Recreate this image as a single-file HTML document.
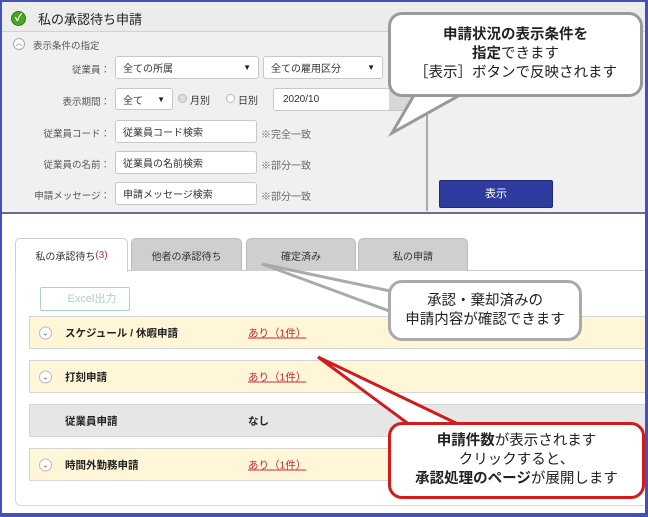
<!DOCTYPE html>
<html><head><meta charset="utf-8"><style>
*{margin:0;padding:0;box-sizing:border-box}
body{width:648px;height:517px;overflow:hidden;background:#fff;font-family:"Liberation Sans","Noto Sans CJK JP",sans-serif;position:relative}
.a{position:absolute}
.lbl{font-size:9.5px;color:#555;text-align:right;width:100px;left:10px}
.box{background:#fff;border:1px solid #c8c8c8;border-radius:3px;font-size:10px;color:#333;padding-left:7px;display:flex;align-items:center}
.sel::after{content:"▼";position:absolute;right:7px;font-size:8px;color:#222}
.note{font-size:10px;color:#666}
.tab{top:238px;height:33px;border-radius:5px 5px 0 0;font-size:10px;color:#333;display:flex;align-items:center;justify-content:center;background:#cfcfcf;border:1px solid #bdbdbd;border-bottom:none}
.row{left:29px;width:625px;border:1px solid #d6d6d6;background:#fff6d8;font-size:10.5px;font-weight:bold;color:#222}
.row span{position:absolute;top:50%;transform:translateY(-50%)}
.chev{left:9px;width:13px;height:13px;border:1px solid #bbb;border-radius:50%;background:#fff;font-size:8px;color:#666;text-align:center;line-height:11px;font-weight:normal}
.lk{left:218px;color:#c0283c;text-decoration:underline;font-weight:normal}
.co{border-radius:14px;background:#fff;text-align:center;color:#222;display:flex;flex-direction:column;justify-content:center;font-size:14.5px;line-height:19px;white-space:nowrap}
</style></head><body>
<div class="a" style="left:0;top:0;width:648px;height:213px;background:#f0f0f0"></div>
<div class="a" style="left:0;top:0;width:648px;height:32px;background:#ececec;border-bottom:1px solid #cfd0dc"></div>
<div class="a" style="left:11px;top:11px;width:15px;height:15px;border-radius:50%;background:#4aa520;border:1px solid #2f7a14;color:#fff;font-size:10px;text-align:center;line-height:13px;font-weight:bold">✓</div>
<div class="a" style="left:38px;top:9px;font-size:13px;color:#222">私の承認待ち申請</div>
<div class="a" style="left:13px;top:38px;width:12px;height:12px;border:1px solid #aaa;border-radius:50%;background:#fff;font-size:7px;text-align:center;line-height:10px;color:#555">︿</div>
<div class="a" style="left:33px;top:38px;font-size:9.5px;color:#555">表示条件の指定</div>

<div class="a lbl" style="top:62px">従業員：</div>
<div class="a box sel" style="left:115px;top:56px;width:144px;height:23px">全ての所属</div>
<div class="a box sel" style="left:263px;top:56px;width:120px;height:23px">全ての雇用区分</div>
<div class="a lbl" style="top:94px">表示期間：</div>
<div class="a box sel" style="left:115px;top:88px;width:58px;height:22px">全て</div>
<div class="a" style="left:178px;top:94px;width:9px;height:9px;border-radius:50%;border:1px solid #bbb;background:#ddd"></div>
<div class="a" style="left:190px;top:92px;font-size:10px;color:#333">月別</div>
<div class="a" style="left:226px;top:94px;width:9px;height:9px;border-radius:50%;border:1px solid #bbb;background:#fff"></div>
<div class="a" style="left:238px;top:92px;font-size:10px;color:#333">日別</div>
<div class="a box" style="left:273px;top:88px;width:141px;height:23px;padding-left:9px">2020/10</div>
<div class="a" style="left:389px;top:89px;width:25px;height:21px;background:#d8d8d8"></div>
<div class="a lbl" style="top:126px">従業員コード：</div>
<div class="a box" style="left:115px;top:120px;width:142px;height:23px">従業員コード検索</div>
<div class="a note" style="left:261px;top:126px">※完全一致</div>
<div class="a lbl" style="top:157px">従業員の名前：</div>
<div class="a box" style="left:115px;top:151px;width:142px;height:23px">従業員の名前検索</div>
<div class="a note" style="left:261px;top:157px">※部分一致</div>
<div class="a lbl" style="top:188px">申請メッセージ：</div>
<div class="a box" style="left:115px;top:182px;width:142px;height:23px">申請メッセージ検索</div>
<div class="a note" style="left:261px;top:188px">※部分一致</div>
<div class="a" style="left:426px;top:95px;width:2px;height:116px;background:#aaa"></div>
<div class="a" style="left:439px;top:180px;width:114px;height:28px;background:#2f3c9e;border:1px solid #1e2a80;border-radius:2px;color:#fff;font-size:11px;text-align:center;line-height:26px">表示</div>
<div class="a" style="left:0;top:212px;width:648px;height:2px;background:#6a6e8c"></div>

<div class="a" style="left:15px;top:270px;width:640px;height:236px;border:1px solid #d8d8d8;border-radius:0 0 6px 6px;border-top:1px solid #ccc"></div>
<div class="a tab" style="left:15px;width:113px;background:#fff;border-color:#ccc;height:34px;z-index:2">私の承認待ち<span style="color:#c0304a">(3)</span></div>
<div class="a tab" style="left:131px;width:111px">他者の承認待ち</div>
<div class="a tab" style="left:246px;width:110px">確定済み</div>
<div class="a tab" style="left:358px;width:110px">私の申請</div>
<div class="a" style="left:40px;top:287px;width:90px;height:24px;border:1px solid #a8d4c2;border-radius:2px;color:#a8d4b8;font-size:11px;text-align:center;line-height:22px;padding-left:14px">Excel出力</div>
<div class="a row" style="top:316px;height:33px"><span class="a chev">⌄</span><span style="left:35px">スケジュール / 休暇申請</span><span class="lk">あり（1件）</span></div>
<div class="a row" style="top:360px;height:33px"><span class="a chev">⌄</span><span style="left:35px">打刻申請</span><span class="lk">あり（1件）</span></div>
<div class="a row" style="top:404px;height:33px;background:#e6e6e6"><span style="left:35px">従業員申請</span><span style="left:218px">なし</span></div>
<div class="a row" style="top:448px;height:33px"><span class="a chev">⌄</span><span style="left:35px">時間外勤務申請</span><span class="lk">あり（1件）</span></div>

<svg class="a" style="left:0;top:0" width="648" height="517">
<polygon points="420,85 392,133 460,95" fill="#fff" stroke="#999" stroke-width="3" stroke-linejoin="miter"/>
<polygon points="395,292 262,264 392,312" fill="#fff" stroke="#aaa" stroke-width="3"/>
<polygon points="410,425 318,357 460,425" fill="#fff" stroke="#d01c1c" stroke-width="3"/>
</svg>
<div class="a co" style="left:388px;top:12px;width:255px;height:85px;border:3px solid #9a9a9a">
<div><b>申請状況の表示条件を</b></div><div><b>指定</b>できます</div><div>［表示］ボタンで反映されます</div></div>
<div class="a co" style="left:388px;top:280px;width:194px;height:61px;border:3px solid #aaa">
<div>承認・棄却済みの</div><div>申請内容が確認できます</div></div>
<div class="a co" style="left:388px;top:422px;width:257px;height:77px;border:3px solid #d01c1c">
<div><b>申請件数</b>が表示されます</div><div>クリックすると、</div><div><b>承認処理のページ</b>が展開します</div></div>

<div class="a" style="left:0;top:0;width:648px;height:517px;border:2px solid #4452b8;border-bottom-width:4px;border-right-width:3px"></div>
</body></html>
